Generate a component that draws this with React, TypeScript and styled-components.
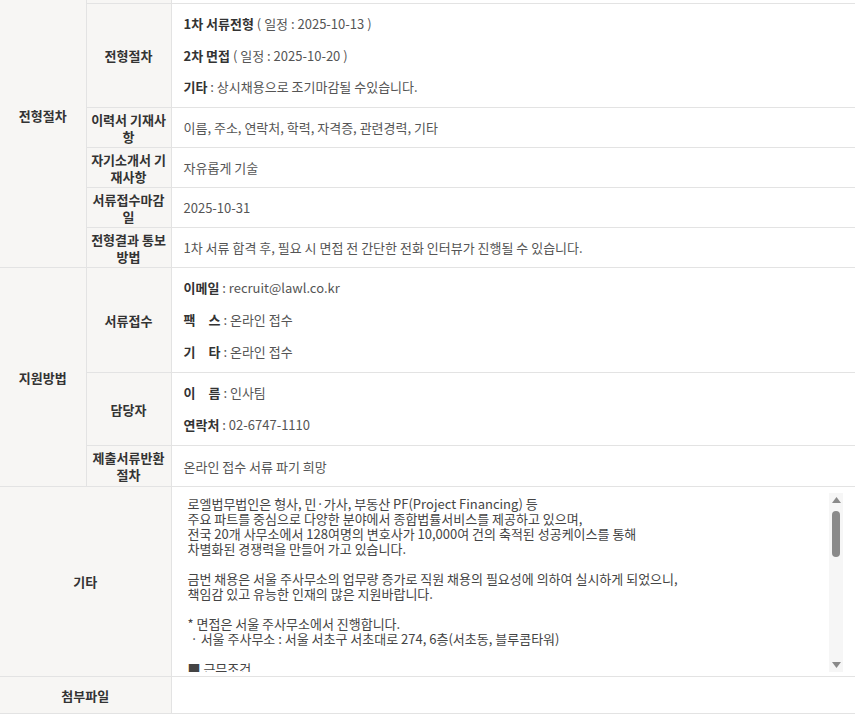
import React from "react";
import styled, { createGlobalStyle } from "styled-components";

const GlobalStyle = createGlobalStyle`
  html, body {
    margin: 0;
    padding: 0;
    background: #fff;
  }
  body {
    font-family: "Noto Sans CJK KR", "Noto Sans", sans-serif;
    font-size: 13px;
    color: #555;
    overflow: hidden;
  }
`;

const Viewport = styled.div`
  height: 717px;
  overflow: hidden;
`;

// page is scrolled: the first row of the group sits above the top edge
const Sheet = styled.div`
  margin-top: -37px;
`;

const Table = styled.table`
  width: 100%;
  border-collapse: collapse;
  table-layout: fixed;
  border-bottom: 1px solid #333;
`;

const GroupHead = styled.th`
  background: #f7f6f4;
  border: 1px solid #e3e3e3;
  border-left: none;
  color: #333;
  font-weight: 700;
  font-size: 13px;
  line-height: 17px;
  padding: 2px 1px;
  text-align: center;
  vertical-align: middle;
`;

const FieldHead = styled(GroupHead)<{ $loose?: boolean }>`
  padding: ${({ $loose }) => ($loose ? "3px 1px" : "2px 1px")};
`;

const Value = styled.td`
  border: 1px solid #e3e3e3;
  border-right: none;
  padding: 10px 12px;
  line-height: 19px;
  color: #555;
  vertical-align: middle;
`;

const MemoCell = styled(Value)`
  padding: 6px 12px 4px;
`;

const AttachCell = styled(Value)``;

const Spacer = styled.div`
  height: 16px;
`;

const Lines = styled.div<{ $gap?: number }>`
  display: flex;
  flex-direction: column;
  gap: ${({ $gap }) => $gap ?? 11.5}px;
  line-height: 20px;
`;

const Strong = styled.b`
  color: #333;
  font-weight: 700;
`;

const Key = styled.b<{ $even?: boolean }>`
  display: inline-block;
  width: ${({ $even }) => ($even ? "37px" : "auto")};
  color: #333;
  font-weight: 700;
  text-align-last: ${({ $even }) => ($even ? "justify" : "auto")};
`;

const MemoBox = styled.div`
  display: flex;
  height: 179px;
  background: #fff;
`;

const MemoText = styled.textarea`
  flex: 1;
  min-width: 0;
  margin: 0;
  border: none;
  outline: none;
  resize: none;
  overflow: hidden;
  padding: 3px 4px;
  font-family: "Noto Sans CJK KR", "Noto Sans", sans-serif;
  font-size: 13px;
  line-height: 15px;
  color: #444;
  background: transparent;
  white-space: pre-wrap;
`;

const ScrollTrack = styled.div`
  width: 14px;
  display: flex;
  flex-direction: column;
  align-items: center;
  background: #f6f6f6;
`;

const ArrowBox = styled.div`
  height: 14px;
  width: 100%;
  display: flex;
  align-items: center;
  justify-content: center;
`;

const Thumb = styled.div`
  width: 8px;
  height: 46px;
  margin-top: 4px;
  border-radius: 4px;
  background: #8a8a8a;
`;

const TrackRest = styled.div`
  flex: 1;
`;

const Arrow = ({ down }: { down?: boolean }) => (
  <svg width="9" height="6" viewBox="0 0 9 6">
    <polygon
      points={down ? "0,0 9,0 4.5,6" : "0,6 9,6 4.5,0"}
      fill="#8a8a8a"
    />
  </svg>
);

const memo = [
  "로엘법무법인은 형사, 민·가사, 부동산 PF(Project Financing) 등",
  "주요 파트를 중심으로 다양한 분야에서 종합법률서비스를 제공하고 있으며,",
  "전국 20개 사무소에서 128여명의 변호사가 10,000여 건의 축적된 성공케이스를 통해",
  "차별화된 경쟁력을 만들어 가고 있습니다.",
  "",
  "금번 채용은 서울 주사무소의 업무량 증가로 직원 채용의 필요성에 의하여 실시하게 되었으니,",
  "책임감 있고 유능한 인재의 많은 지원바랍니다.",
  "",
  "* 면접은 서울 주사무소에서 진행합니다.",
  " · 서울 주사무소 : 서울 서초구 서초대로 274, 6층(서초동, 블루콤타워)",
  "",
  "■ 근무조건",
  " · 근무시간 : 09:00 ~ 18:00",
  " · 근무지 : 서울 주사무소",
].join("\n");

const App: React.FC = () => {
  return (
    <Viewport>
      <GlobalStyle />
      <Sheet>
        <Table>
          <colgroup>
            <col style={{ width: 86 }} />
            <col style={{ width: 85 }} />
            <col />
          </colgroup>
          <tbody>
            <tr>
              <GroupHead rowSpan={6}>전형절차</GroupHead>
              <FieldHead>전형방법</FieldHead>
              <Value>서류전형 후 면접</Value>
            </tr>
            <tr>
              <FieldHead>전형절차</FieldHead>
              <Value>
                <Lines>
                  <div>
                    <Strong>1차 서류전형</Strong> ( 일정 : 2025-10-13 )
                  </div>
                  <div>
                    <Strong>2차 면접</Strong> ( 일정 : 2025-10-20 )
                  </div>
                  <div>
                    <Strong>기타</Strong> : 상시채용으로 조기마감될 수있습니다.
                  </div>
                </Lines>
              </Value>
            </tr>
            <tr>
              <FieldHead>이력서 기재사항</FieldHead>
              <Value>이름, 주소, 연락처, 학력, 자격증, 관련경력, 기타</Value>
            </tr>
            <tr>
              <FieldHead>자기소개서 기재사항</FieldHead>
              <Value>자유롭게 기술</Value>
            </tr>
            <tr>
              <FieldHead>서류접수마감일</FieldHead>
              <Value>2025-10-31</Value>
            </tr>
            <tr>
              <FieldHead>전형결과 통보방법</FieldHead>
              <Value>1차 서류 합격 후, 필요 시 면접 전 간단한 전화 인터뷰가 진행될 수 있습니다.</Value>
            </tr>
            <tr>
              <GroupHead rowSpan={3}>지원방법</GroupHead>
              <FieldHead>서류접수</FieldHead>
              <Value>
                <Lines $gap={12}>
                  <div>
                    <Key>이메일</Key> : recruit@lawl.co.kr
                  </div>
                  <div>
                    <Key $even>팩 스</Key> : 온라인 접수
                  </div>
                  <div>
                    <Key $even>기 타</Key> : 온라인 접수
                  </div>
                </Lines>
              </Value>
            </tr>
            <tr>
              <FieldHead>담당자</FieldHead>
              <Value>
                <Lines $gap={12}>
                  <div>
                    <Key $even>이 름</Key> : 인사팀
                  </div>
                  <div>
                    <Key>연락처</Key> : 02-6747-1110
                  </div>
                </Lines>
              </Value>
            </tr>
            <tr>
              <FieldHead $loose>제출서류반환절차</FieldHead>
              <Value>온라인 접수 서류 파기 희망</Value>
            </tr>
            <tr>
              <GroupHead colSpan={2}>기타</GroupHead>
              <MemoCell>
                <MemoBox>
                  <MemoText readOnly value={memo} />
                  <ScrollTrack>
                    <ArrowBox>
                      <Arrow />
                    </ArrowBox>
                    <Thumb />
                    <TrackRest />
                    <ArrowBox>
                      <Arrow down />
                    </ArrowBox>
                  </ScrollTrack>
                </MemoBox>
              </MemoCell>
            </tr>
            <tr>
              <GroupHead colSpan={2}>첨부파일</GroupHead>
              <AttachCell>
                <Spacer />
              </AttachCell>
            </tr>
          </tbody>
        </Table>
      </Sheet>
    </Viewport>
  );
};

export default App;
